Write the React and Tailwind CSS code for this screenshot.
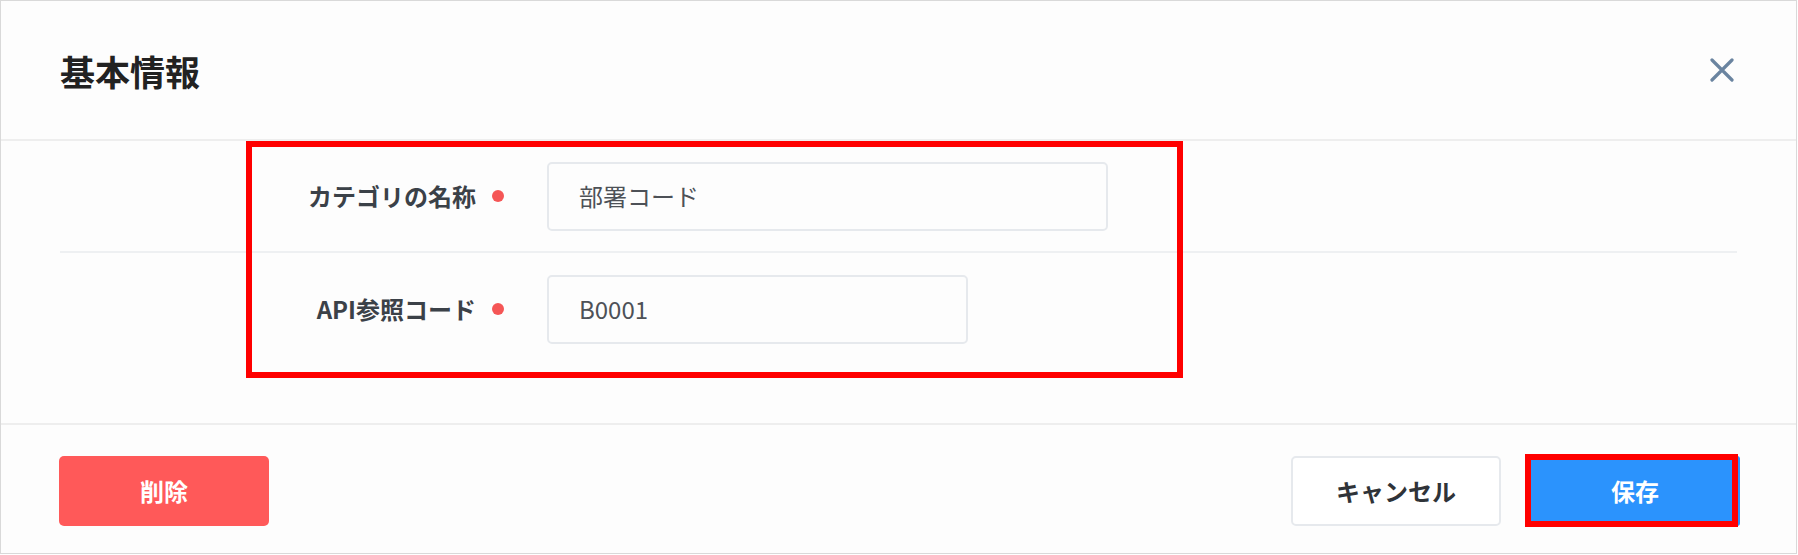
import React from "react";

const FONT = { fontFamily: '"Noto Sans CJK JP", "Noto Sans", sans-serif' };

function Row({ label, value, inputWidth, last }) {
  return (
    <div className={`flex items-center h-[112px] ${last ? "" : "border-b-2 border-[#eef0f2]"}`}>
      <div className="w-[444px] flex items-center justify-end gap-[16px]">
        <span className="text-[24px] font-bold text-[#3b4148] leading-none">{label}</span>
        <span className="w-[12px] h-[12px] rounded-full bg-[#f55656]" />
      </div>
      <div
        className={`ml-[43px] h-[69px] ${inputWidth} border-2 border-[#e6e9ed] rounded-[5px] flex items-center px-[30px] text-[24px] text-[#4d5157]`}
      >
        {value}
      </div>
    </div>
  );
}

export default function App() {
  return (
    <div className="w-[1798px] h-[555px] bg-white" style={FONT}>
      <div className="w-[1797px] h-[554px] border border-[#d9d9d9] flex flex-col bg-[#fdfdfd]">
        <div className="h-[140px] shrink-0 border-b-2 border-[#eeeeee] flex items-center justify-between pl-[59px] pr-[62px]">
          <h1 className="text-[35px] font-bold text-[#222] leading-none">基本情報</h1>
          <svg width="24" height="24" viewBox="0 0 24 24" className="text-[#6a84a0]">
            <path d="M2 2 L22 22 M22 2 L2 22" stroke="currentColor" strokeWidth="3.2" strokeLinecap="round" />
          </svg>
        </div>
        <div className="relative h-[282px] shrink-0 px-[59px]">
          <Row label="カテゴリの名称" value="部署コード" inputWidth="w-[561px]" />
          <Row label="API参照コード" value="B0001" inputWidth="w-[421px]" last />
          <div className="absolute left-[245px] top-0 w-[937px] h-[237px] border-[6px] border-[#ff0000] pointer-events-none" />
        </div>
        <div className="flex-1 border-t-2 border-[#eeeeee] flex items-center justify-between pl-[58px] pr-[56px] pt-[4px]">
          <button className="w-[210px] h-[70px] rounded-[5px] bg-[#ff5959] text-white text-[24px] font-bold">
            削除
          </button>
          <div className="flex items-center gap-[29px]">
            <button className="w-[210px] h-[70px] rounded-[5px] bg-white border-2 border-[#e6e9ed] text-[#2f3338] text-[24px] font-bold">
              キャンセル
            </button>
            <div className="relative">
              <button className="w-[210px] h-[70px] rounded-[3px] bg-[#2b93fd] text-white text-[24px] font-bold">
                保存
              </button>
              <div className="absolute -left-[5px] -top-[2px] w-[213px] h-[73px] border-[6px] border-[#ff0000] pointer-events-none" />
            </div>
          </div>
        </div>
      </div>
    </div>
  );
}
